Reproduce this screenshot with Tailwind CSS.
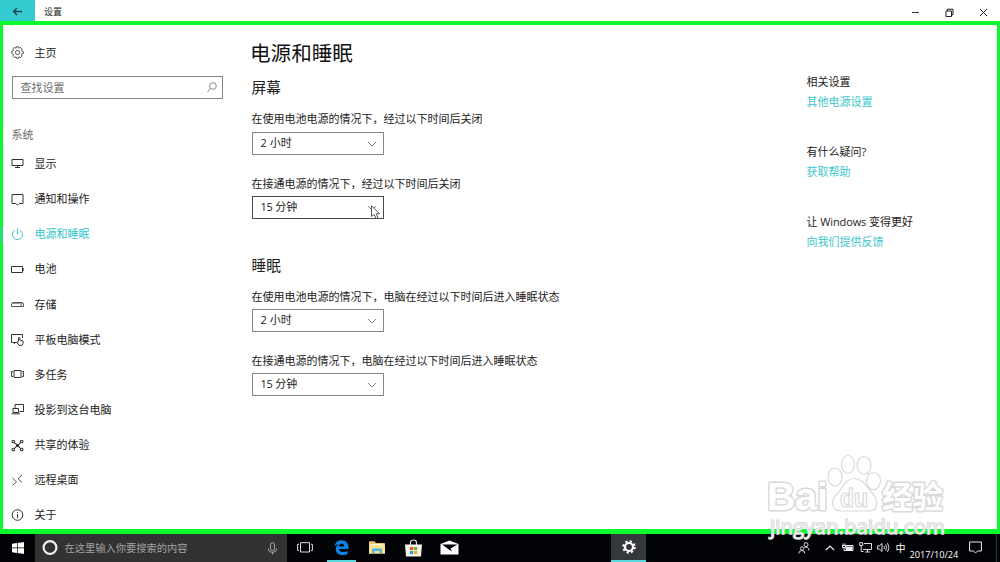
<!DOCTYPE html>
<html lang="zh-CN">
<head>
<meta charset="utf-8">
<title>设置</title>
<script src="https://cdn.jsdelivr.net/npm/@tailwindcss/browser@4"></script>
</head>
<body class="w-[1000px] h-[562px] overflow-hidden bg-white flex flex-col relative text-[11px] leading-[16px] text-[#222] font-['Open_Sans','Noto_Sans_CJK_SC',sans-serif]">

<header class="h-[21px] shrink-0 flex items-center">
  <div class="w-[35px] h-full bg-[#33cbd0] flex items-center justify-center">
    <svg width="11" height="10" viewBox="0 0 11 10" fill="none" stroke="#1c4547" stroke-width="1.3"><path d="M10 5.500H1.500M5 2L1.500 5.500L5 9"/></svg>
  </div>
  <span class="ml-[9px] mt-[2px] text-[9px] flex-1">设置</span>
  <div class="flex items-center gap-[25px] pr-[12px] pt-[3px]">
    <svg width="9" height="9" viewBox="0 0 9 9" stroke="#333"><path d="M1 4.500H8"/></svg>
    <svg width="9" height="9" viewBox="0 0 9 9" fill="none" stroke="#222"><path d="M1 3H6.500V8.500H1ZM2.500 3V1.200H8V6.800H6.500"/></svg>
    <svg width="9" height="9" viewBox="0 0 9 9" fill="none" stroke="#222"><path d="M1 1L8 8M8 1L1 8"/></svg>
  </div>
</header>

<main class="h-[513px] shrink-0 border-[#0bfa2d] border-x-[3px] border-t-[4px] border-b-[5px] flex">
  <nav class="w-[237px] shrink-0 pt-[20px]">
    <div class="flex items-center h-[16px] pl-[8px]">
      <svg class="mr-[10.500px] mb-px" width="13" height="13" viewBox="0 0 13 13" fill="none" stroke="#444" stroke-width=".9"><circle cx="6.500" cy="6.500" r="2.100"/><path d="M5.600 .7H7.400L7.900 2.200L9.600 1.400L11 2.900L10.500 4.600L12.300 5.500V7.500L10.600 8.200L11 10.100L9.700 11.500L7.900 10.900L7.300 12.300H5.600L5.100 10.800L3.300 11.600L2 10.200L2.500 8.300L.7 7.500V5.500L2.400 4.800L1.900 2.900L3.300 1.500L5.100 2.200Z"/></svg>
      <span>主页</span>
    </div>
    <div class="mt-[15px] ml-[9px] w-[210.500px] h-[23px] border border-[#858585] flex items-center justify-between pl-[7.500px] pr-[5px] text-[#6c6c6c]">
      <span>查找设置</span>
      <svg width="10" height="11" viewBox="0 0 10 11" fill="none" stroke="#888"><circle cx="6" cy="4" r="3.300"/><path d="M3.600 6.400L.5 10"/></svg>
    </div>
    <div class="mt-[28px] ml-[8.500px] text-[#6c6c6c]">系统</div>
    <div class="mt-[3.400px] flex flex-col">
      <a class="h-[35.150px] pl-[8px] flex items-center gap-[10.500px]"><svg width="13" height="13" viewBox="0 0 13 13" fill="none" stroke="#333"><path d="M1 2.500H12V8.500H1ZM6.500 9V10.500M4 10.500H9"/></svg><span>显示</span></a>
      <a class="h-[35.150px] pl-[8px] flex items-center gap-[10.500px]"><svg width="13" height="13" viewBox="0 0 13 13" fill="none" stroke="#333"><path d="M1 1.500H12V10.500H8.200L6.500 12.200L4.800 10.500H1Z"/></svg><span>通知和操作</span></a>
      <a class="relative h-[35.150px] pl-[8px] flex items-center gap-[10.500px] text-[#35c5ca]"><i class="absolute left-[-3px] top-[9px] w-[3px] h-[17px] bg-[#1fe070]"></i><svg width="13" height="13" viewBox="0 0 13 13" fill="none" stroke="#35c5ca"><path d="M6.500 .5V6.500M4 2.200A5 5 0 1 0 9 2.200"/></svg><span>电源和睡眠</span></a>
      <a class="h-[35.150px] pl-[8px] flex items-center gap-[10.500px]"><svg width="13" height="13" viewBox="0 0 13 13" fill="none" stroke="#333"><path d="M.5 3.500H11.500V9.500H.5ZM12.200 5V8"/></svg><span>电池</span></a>
      <a class="h-[35.150px] pl-[8px] flex items-center gap-[10.500px]"><svg width="13" height="13" viewBox="0 0 13 13" fill="none" stroke="#555"><path d="M.5 5.500L1.500 4.500H11.500L12.500 5.500V8.500H.5Z"/><path d="M1 5.500H12" stroke="#999"/><path d="M9 7H11"/></svg><span>存储</span></a>
      <a class="h-[35.150px] pl-[8px] flex items-center gap-[10.500px]"><svg width="13" height="13" viewBox="0 0 13 13" fill="none" stroke="#333"><path d="M5 9.500H.5V1.500H11.500V5M3.500 9.500V11"/><path d="M7.500 8.500V4.800Q8.200 4 8.900 4.800V7L12 8V10.500L11 12.300H7.800L5.500 9Q6 8 7.500 9.300"/></svg><span>平板电脑模式</span></a>
      <a class="h-[35.150px] pl-[8px] flex items-center gap-[10.500px]"><svg width="13" height="13" viewBox="0 0 13 13" fill="none" stroke="#333"><path d="M3 2.500H10V9.500H3ZM2 3.500H.6V8.500H2M11 3.500H12.400V8.500H11"/></svg><span>多任务</span></a>
      <a class="h-[35.150px] pl-[8px] flex items-center gap-[10.500px]"><svg width="13" height="13" viewBox="0 0 13 13" fill="none" stroke="#333"><path d="M4 5V1.500H12.500V8.500H8.500M2 5.500H7.500V9.500H2ZM.5 10.800H9"/></svg><span>投影到这台电脑</span></a>
      <a class="h-[35.150px] pl-[8px] flex items-center gap-[10.500px]"><svg width="13" height="13" viewBox="0 0 13 13" fill="none" stroke="#333" stroke-width="1.100"><path d="M3.200 3.400L9.800 9.600M9.800 3.400L3.200 9.600"/><circle cx="2.300" cy="2.500" r="1.300"/><circle cx="10.700" cy="2.500" r="1.300"/><circle cx="2.300" cy="10.500" r="1.300"/><circle cx="10.700" cy="10.500" r="1.300"/><circle cx="6.500" cy="6.500" r="1" fill="#333"/></svg><span>共享的体验</span></a>
      <a class="h-[35.150px] pl-[8px] flex items-center gap-[10.500px]"><svg width="13" height="13" viewBox="0 0 13 13" fill="none" stroke="#555"><path d="M1.500 4L5.500 7.800L1.500 11.500M11 1L7 4.700L11 8.500"/></svg><span>远程桌面</span></a>
      <a class="h-[35.150px] pl-[8px] flex items-center gap-[10.500px]"><svg width="13" height="13" viewBox="0 0 13 13" fill="none" stroke="#333"><circle cx="6.500" cy="6" r="5.300"/><path d="M6.500 5.300V9M6.500 3V4.100"/></svg><span>关于</span></a>
    </div>
  </nav>

  <section class="flex-1 pl-[11.500px] pt-[13px]">
    <h1 class="-ml-[1.500px] text-[20.600px] leading-[30px] text-[#111]">电源和睡眠</h1>
    <h2 class="mt-[9px] text-[14.700px] leading-[20px]">屏幕</h2>
    <p class="mt-[14px]">在使用电池电源的情况下，经过以下时间后关闭</p>
    <div class="mt-[5px] w-[132px] h-[23px] border border-[#858585] flex items-center justify-between pl-[8px] pr-[6px]"><span class="-mt-px">2 小时</span><svg width="10" height="6" viewBox="0 0 10 6" fill="none" stroke="#888"><path d="M.8 .8L5 5L9.200 .8"/></svg></div>
    <p class="mt-[21px]">在接通电源的情况下，经过以下时间后关闭</p>
    <div class="mt-[4px] w-[132px] h-[23px] border border-[#4a4a4a] flex items-center justify-between pl-[8px] pr-[6px]"><span class="-mt-px tracking-[-0.200px]">15 分钟</span><svg width="10" height="6" viewBox="0 0 10 6" fill="none" stroke="#777"><path d="M.8 .8L5 5L9.200 .8"/></svg></div>
    <h2 class="mt-[36px] text-[14.700px] leading-[20px]">睡眠</h2>
    <p class="mt-[14px]">在使用电池电源的情况下，电脑在经过以下时间后进入睡眠状态</p>
    <div class="mt-[4px] w-[132px] h-[23px] border border-[#858585] flex items-center justify-between pl-[8px] pr-[6px]"><span class="-mt-px">2 小时</span><svg width="10" height="6" viewBox="0 0 10 6" fill="none" stroke="#888"><path d="M.8 .8L5 5L9.200 .8"/></svg></div>
    <p class="mt-[21px]">在接通电源的情况下，电脑在经过以下时间后进入睡眠状态</p>
    <div class="mt-[4px] w-[132px] h-[23px] border border-[#858585] flex items-center justify-between pl-[8px] pr-[6px]"><span class="-mt-px tracking-[-0.200px]">15 分钟</span><svg width="10" height="6" viewBox="0 0 10 6" fill="none" stroke="#888"><path d="M.8 .8L5 5L9.200 .8"/></svg></div>
  </section>

  <aside class="w-[190.500px] shrink-0 pt-[49px] flex flex-col gap-[34.200px]">
    <div><p>相关设置</p><p class="mt-[4px] text-[#3cc6cb]">其他电源设置</p></div>
    <div><p>有什么疑问?</p><p class="mt-[4px] text-[#3cc6cb]">获取帮助</p></div>
    <div><p>让 <span class="tracking-[-0.150px]">Windows</span> 变得更好</p><p class="mt-[4px] text-[#3cc6cb]">向我们提供反馈</p></div>
  </aside>
</main>

<footer class="h-[28px] shrink-0 bg-[#020306] flex items-center text-white">
  <div class="w-[35px] flex justify-center"><svg width="12" height="12" viewBox="0 0 12 12" fill="#fff"><path d="M0 1.700L5 1V5.600H0ZM5.700 .9L12 0V5.600H5.700ZM0 6.300H5V11L0 10.300ZM5.700 6.300H12V12L5.700 11.100Z"/></svg></div>
  <div class="w-[252px] h-full bg-[#323233] flex items-center pl-[7px] pr-[10px] text-[#a3a3a3]">
    <svg width="16" height="16" viewBox="0 0 16 16" fill="none" stroke="#f2f2f2" stroke-width="2.200"><circle cx="8" cy="7.500" r="6.400"/></svg>
    <span class="ml-[6.500px] flex-1 text-[10.250px]">在这里输入你要搜索的内容</span>
    <svg width="9" height="13" viewBox="0 0 9 13" fill="none" stroke="#aaa"><rect x="2.500" y=".7" width="4" height="7.800" rx="2"/><path d="M.6 6.500V8Q.8 10.300 4.500 10.300T8.400 8V6.500M4.500 10.300V12.500"/></svg>
  </div>
  <div class="w-[35px] pb-px flex justify-center"><svg width="16" height="11" viewBox="0 0 16 11" fill="none" stroke="#ddd"><path d="M3.500 .7H12.500V10H3.500ZM2 2.300H.6V8.500H2M14 2.300H15.400V8.500H14"/></svg></div>
  <div class="relative w-[38px] h-full flex items-center justify-center">
    <svg class="mb-px" width="15" height="15" viewBox="0 0 15 15" fill="#0b83e4"><path d="M.5 6.700C1.200 2.200 4 .3 7.600 .3C12 .3 14.500 3.300 14.500 7.500V9H5C5.200 11.200 7 12.100 9.200 12.100C11 12.100 12.400 11.600 13.500 11V14C12.200 14.600 10.600 15 8.600 15C4.500 15 1.800 12.800 1.800 9.200C1.800 6.700 3.200 5 5.200 4.100C3.200 4.200 1.500 5.200 .5 6.700ZM5.100 6.400H10C10 4.600 9.200 3.600 7.700 3.600C6.200 3.600 5.300 4.800 5.100 6.400Z"/></svg>
    <i class="absolute left-[5px] bottom-0 w-[29px] h-[2px] bg-[#58d7dc]"></i>
  </div>
  <div class="w-[34px] pb-px flex justify-center"><svg width="16" height="13" viewBox="0 0 16 13"><path d="M0 1Q0 .3 .8 .3H5.500L7 2H15.200Q16 2 16 3V12.500H0Z" fill="#e8c765"/><path d="M1 3H15V5H1Z" fill="#fff4bd"/><path d="M0 4.500H16V12.500H0Z" fill="#fce48d"/><path d="M3 12.500V7.500H13V12.500H10.500V10H5.500V12.500Z" fill="#55b5e5"/></svg></div>
  <div class="w-[38px] pb-px flex justify-center"><svg width="17" height="18" viewBox="0 0 17 18"><path d="M5.500 6V3.500Q5.500 1 8.500 1T11.500 3.500V6" fill="none" stroke="#ddd" stroke-width="1.200"/><path d="M0 5.500H17L16 17.500H1Z" fill="#f6f3ea"/><path d="M5 8H8.200V11.100H5Z" fill="#e65026"/><path d="M9 8H12.200V11.100H9Z" fill="#74ad24"/><path d="M5 12H8.200V15.100H5Z" fill="#2899db"/><path d="M9 12H12.200V15.100H9Z" fill="#e9b31d"/></svg></div>
  <div class="w-[35px] pb-px flex justify-center"><svg width="19" height="15" viewBox="0 0 19 15"><path d="M.5 4L9.500 .5L18.500 4V14.500H.5Z" fill="#fff"/><path d="M2 4.500H17.500L10.500 8.500L12 11.500L8.500 9.200Z" fill="#020306"/></svg></div>
  <div class="ml-[144px] w-[35px] h-full bg-[#34373b] border-b-2 border-[#58d7dc] flex items-center justify-center"><svg width="14" height="14" viewBox="0 0 14 14" fill="none" stroke="#fff"><circle cx="7" cy="7" r="4" stroke-width="2.200"/><circle cx="7" cy="7" r="5.700" stroke-width="2" stroke-dasharray="2.240 2.240"/></svg></div>
  <div class="flex-1 h-full flex items-center pl-[152px] relative">
    <svg class="mb-px" width="12" height="12" viewBox="0 0 12 12" fill="none" stroke="#ddd"><circle cx="8" cy="2.700" r="2"/><circle cx="4" cy="6.500" r="1.700"/><path d="M.8 11.500Q1 8.500 4 8.500T6.800 11.500M6.500 5.500Q8 4.500 9.500 5.500Q11 6.500 11 8.500"/></svg>
    <svg class="ml-[15px] mb-px" width="10" height="6" viewBox="0 0 10 6" fill="none" stroke="#eee" stroke-width="1.200"><path d="M1 5L5 1L9 5"/></svg>
    <svg class="ml-[7px] mb-px" width="12" height="9" viewBox="0 0 12 9" fill="none" stroke="#eee"><path d="M1 .5V2.500M3 .5V2.500M.5 2.500H3.500V4.500H.5ZM2 4.500V7.500H11V2.500H4"/><path d="M4 4H10V6.500H4Z" fill="#eee"/></svg>
    <svg class="ml-[5px] mb-px" width="13" height="11" viewBox="0 0 13 11" fill="none" stroke="#ddd"><path d="M5 1.500H12.500V7.500H4M8.500 7.500V10M6 10H11M.7 .7H3.700V3.500H.7ZM2.200 3.500V9.500H4.500"/></svg>
    <svg class="ml-[5px] mb-px" width="13" height="11" viewBox="0 0 13 11" fill="none" stroke="#ddd"><path d="M.6 3.800H2.500L5 1.500V9.500L2.500 7.200H.6ZM7 4Q8 5.500 7 7M8.700 2.500Q10.500 5.500 8.700 8.500M10.500 1Q13.500 5.500 10.500 10"/></svg>
    <span class="ml-[5.500px] mb-px text-[10px]">中</span>
    <span class="ml-[4px] mt-[13px] text-[9.200px] w-[50px] whitespace-nowrap">2017/10/24</span>
    <svg class="ml-[9.500px] mb-px" width="13" height="13" viewBox="0 0 13 13" fill="none" stroke="#eee"><path d="M.6 1H12.400V10H8.500L6.500 12L4.500 10H.6Z"/></svg>
    <i class="absolute right-[3px] top-0 w-px h-full bg-[#33363a]"></i>
  </div>
</footer>

<svg class="absolute left-[370px] top-[205px]" width="12" height="16" viewBox="0 0 12 16"><path d="M1.500 .8V11.500L4 9.400L6 13.500L8 12.600L6.200 8.700H9.500Z" fill="#fff" stroke="#555"/></svg>

<svg class="absolute left-[760px] top-[450px]" width="195" height="92" viewBox="0 0 195 92" fill="#fff" stroke="#d9d9d9" stroke-width="1.200">
  <g font-weight="bold" paint-order="stroke" stroke-width="3" stroke-linejoin="round">
    <text x="7" y="60" font-size="39" font-family="'Liberation Sans',sans-serif" textLength="61" lengthAdjust="spacingAndGlyphs">Bai</text>
    <text x="122" y="57.500" font-size="30.500" font-family="'Noto Sans CJK SC',sans-serif">经验</text>
  </g>
  <g transform="translate(-20 0)">
    <ellipse cx="95" cy="27" rx="7" ry="9"/><ellipse cx="108" cy="14.500" rx="6.500" ry="9"/><ellipse cx="124" cy="15.500" rx="7" ry="9"/><ellipse cx="133.500" cy="31" rx="7" ry="8.500"/>
    <path d="M114 28.500C123 28.500 126 36 132 43C139 50 139 61 129 61H102C91 61 90 51 97 44C104 37 105 28.500 114 28.500Z"/>
  </g>
  <text x="80" y="57" font-size="25" font-family="'Liberation Sans',sans-serif" font-weight="bold" textLength="28" lengthAdjust="spacingAndGlyphs">du</text>
  <text x="10" y="83.500" font-size="20" font-family="'Open Sans',sans-serif" textLength="175" lengthAdjust="spacingAndGlyphs" fill="#ececec" stroke="#d6d6d6" stroke-width="1.400" paint-order="stroke">jingyan.baidu.com</text>
</svg>
</body>
</html>
